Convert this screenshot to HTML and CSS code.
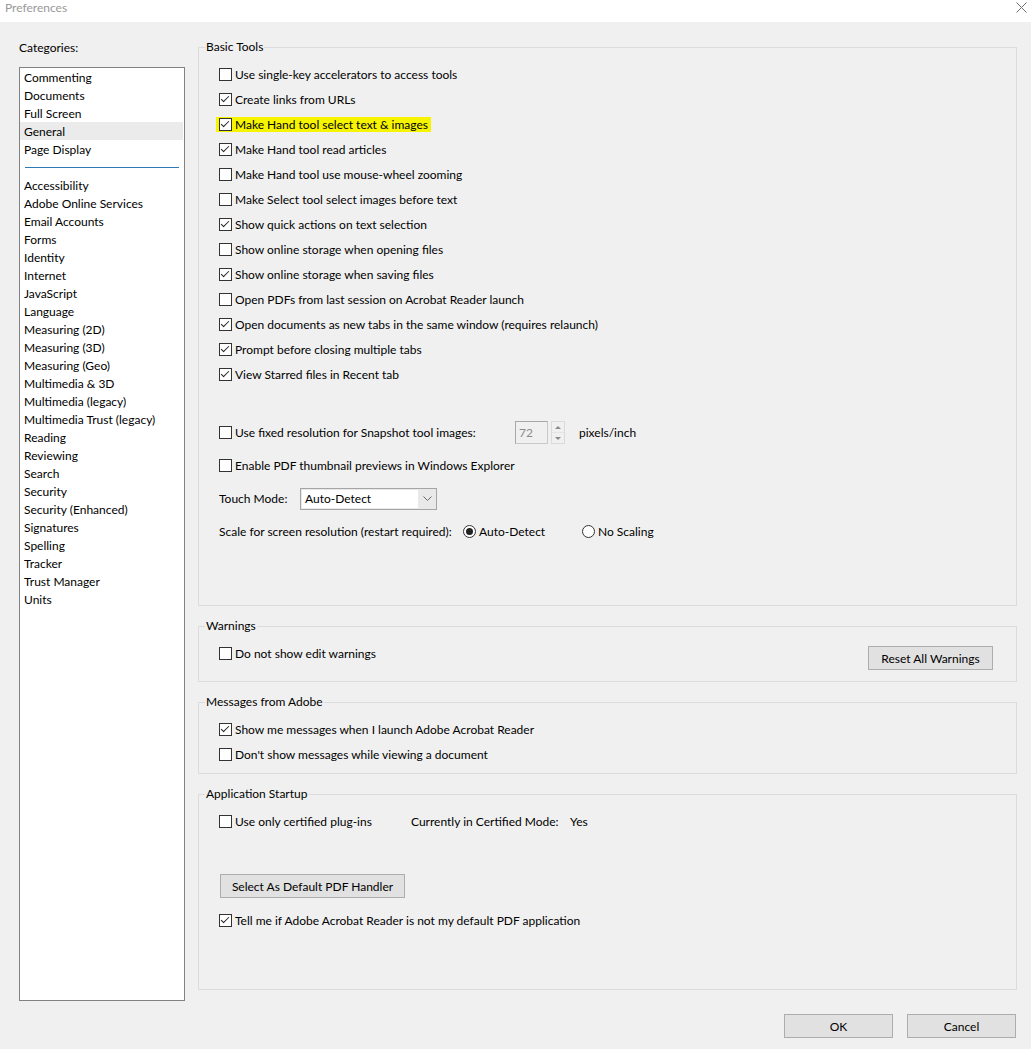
FILE: index.html
```html
<!DOCTYPE html>
<html lang="en">
<head>
  <meta charset="UTF-8">
  <title>Preferences</title>
  <link rel="stylesheet" href="styles.css">
</head>
<body>
  <!-- title bar -->
  <header class="titlebar">
    <span class="title">Preferences</span>
    <span class="close" title="Close">
      <svg width="11" height="11" viewBox="0 0 11 11"><path d="M0.5 0.5 L10.5 10.5 M10.5 0.5 L0.5 10.5" stroke="#6f6f6f" stroke-width="1" fill="none"/></svg>
    </span>
  </header>

  <div class="dialog">
    <!-- categories -->
    <aside class="categories">
      <div class="cat-label">Categories:</div>
      <ul class="cat-list">
        <li>Commenting</li>
        <li>Documents</li>
        <li>Full Screen</li>
        <li class="selected">General</li>
        <li>Page Display</li>
        <li class="sep"></li>
        <li>Accessibility</li>
        <li>Adobe Online Services</li>
        <li>Email Accounts</li>
        <li>Forms</li>
        <li>Identity</li>
        <li>Internet</li>
        <li>JavaScript</li>
        <li>Language</li>
        <li>Measuring (2D)</li>
        <li>Measuring (3D)</li>
        <li>Measuring (Geo)</li>
        <li>Multimedia &amp; 3D</li>
        <li>Multimedia (legacy)</li>
        <li>Multimedia Trust (legacy)</li>
        <li>Reading</li>
        <li>Reviewing</li>
        <li>Search</li>
        <li>Security</li>
        <li>Security (Enhanced)</li>
        <li>Signatures</li>
        <li>Spelling</li>
        <li>Tracker</li>
        <li>Trust Manager</li>
        <li>Units</li>
      </ul>
    </aside>

    <!-- settings panel -->
    <main class="panel">
      <fieldset class="group group-basic">
        <legend>Basic Tools</legend>
        <div class="group-body">
          <label class="opt"><span class="cb"></span>Use single-key accelerators to access tools</label>
          <label class="opt"><span class="cb on"></span>Create links from URLs</label>
          <label class="opt"><span class="hl"><span class="cb on"></span>Make Hand tool select text &amp; images</span></label>
          <label class="opt"><span class="cb on"></span>Make Hand tool read articles</label>
          <label class="opt"><span class="cb"></span>Make Hand tool use mouse-wheel zooming</label>
          <label class="opt"><span class="cb"></span>Make Select tool select images before text</label>
          <label class="opt"><span class="cb on"></span>Show quick actions on text selection</label>
          <label class="opt"><span class="cb"></span>Show online storage when opening files</label>
          <label class="opt"><span class="cb on"></span>Show online storage when saving files</label>
          <label class="opt"><span class="cb"></span>Open PDFs from last session on Acrobat Reader launch</label>
          <label class="opt"><span class="cb on"></span>Open documents as new tabs in the same window (requires relaunch)</label>
          <label class="opt"><span class="cb on"></span>Prompt before closing multiple tabs</label>
          <label class="opt"><span class="cb on"></span>View Starred files in Recent tab</label>

          <div class="wide-rows">
            <div class="wide">
              <label class="opt snap-label"><span class="cb"></span>Use fixed resolution for Snapshot tool images:</label>
              <span class="spin-input">72</span>
              <span class="spin-btns">
                <span class="spin-up"></span>
                <span class="spin-down"></span>
              </span>
              <span class="unit">pixels/inch</span>
            </div>
            <div class="wide">
              <label class="opt"><span class="cb"></span>Enable PDF thumbnail previews in Windows Explorer</label>
            </div>
            <div class="wide">
              <span class="touch-label">Touch Mode:</span>
              <span class="combo">
                <span class="combo-text">Auto-Detect</span>
                <span class="combo-arrow">
                  <svg width="9" height="5" viewBox="0 0 9 5"><path d="M0.5 0.5 L4.5 4.5 L8.5 0.5" stroke="#6a6a6a" fill="none"/></svg>
                </span>
              </span>
            </div>
            <div class="wide">
              <span class="scale-label">Scale for screen resolution (restart required):</span>
              <label class="radio-opt first"><span class="rb on"></span>Auto-Detect</label>
              <label class="radio-opt"><span class="rb"></span>No Scaling</label>
            </div>
          </div>
        </div>
      </fieldset>

      <fieldset class="group group-warn">
        <legend>Warnings</legend>
        <div class="group-body warn-body">
          <label class="opt"><span class="cb"></span>Do not show edit warnings</label>
          <button class="btn btn-reset">Reset All Warnings</button>
        </div>
      </fieldset>

      <fieldset class="group group-msg">
        <legend>Messages from Adobe</legend>
        <div class="group-body">
          <label class="opt"><span class="cb on"></span>Show me messages when I launch Adobe Acrobat Reader</label>
          <label class="opt"><span class="cb"></span>Don't show messages while viewing a document</label>
        </div>
      </fieldset>

      <fieldset class="group group-startup">
        <legend>Application Startup</legend>
        <div class="group-body">
          <div class="cert-row">
            <label class="opt cert-opt"><span class="cb"></span>Use only certified plug-ins</label>
            <span class="cert-label">Currently in Certified Mode:</span>
            <span>Yes</span>
          </div>
          <button class="btn btn-handler">Select As Default PDF Handler</button>
          <label class="opt tell-opt"><span class="cb on"></span>Tell me if Adobe Acrobat Reader is not my default PDF application</label>
        </div>
      </fieldset>
    </main>
  </div>

  <footer class="footer">
    <button class="btn btn-foot">OK</button>
    <button class="btn btn-foot">Cancel</button>
  </footer>
</body>
</html>
```

FILE: styles.css
```css
* { box-sizing: border-box; }
body { margin: 0; background: #f0f0f0; font-family: "Segoe UI", "Lato", "Noto Sans", sans-serif; font-size: 12px; color: #000; }

/* title bar */
.titlebar { height: 22px; background: #fff; display: flex; justify-content: space-between; padding: 0 2px 0 5px; }
.title { color: #999; line-height: 16px; }
.close { display: flex; padding: 2px 2px 0 0; }

/* main layout */
.dialog { display: flex; height: 979px; }
.categories { width: 185px; padding: 18px 0 0 19px; margin-right: 13px; }
.cat-label { line-height: 16px; margin-bottom: 11px; }
.cat-list { list-style: none; margin: 0; padding: 0; height: 934px; background: #fff; border: 1px solid #828282; }
.cat-list li { height: 18px; line-height: 17px; padding: 1px 0 0 4px; white-space: nowrap; }
.cat-list li.selected { background: #ebebeb; margin-right: 1px; }
.cat-list li.sep { padding: 9px 5px 0 5px; }
.cat-list li.sep::after { content: ''; display: block; border-top: 1px solid #2b7bb9; }

.panel { width: 819px; padding-top: 17px; display: flex; flex-direction: column; gap: 12px; }

/* group boxes */
.group { margin: 0; border: 1px solid #dcdcdc; padding: 0 0 0 6px; min-width: 0; }
.group legend { padding: 0 1px; line-height: 16px; }
.group-body { padding: 7px 0 0 14px; }
.group-basic { padding-bottom: 57px; }
.group-warn { padding-bottom: 11px; }
.group-msg { padding-bottom: 6px; }
.group-startup { padding-bottom: 56px; }

/* checkbox rows */
.opt { display: flex; align-items: center; height: 25px; white-space: nowrap; }
.cb { position: relative; width: 13px; height: 13px; border: 1px solid #333; background: #fff; margin-right: 3px; flex: none; }
.cb.on::after { content: ''; position: absolute; left: 3px; top: 0px; width: 3px; height: 7px; border-right: 1px solid #222; border-bottom: 1px solid #222; transform: rotate(45deg); }
.hl { display: flex; align-items: center; background: #f7f400; margin-left: -3px; padding: 0 3px; height: 15px; }

.wide-rows { margin-top: 29px; }
.wide { display: flex; align-items: center; height: 33px; white-space: nowrap; }
.snap-label { width: 296px; }
.spin-input { width: 33px; height: 23px; border: 1px solid #c8c8c8; border-top-color: #a8a8a8; border-left-color: #a8a8a8; color: #8c8c8c; padding-left: 3px; line-height: 21px; }
.spin-btns { display: flex; flex-direction: column; width: 14px; height: 23px; margin-left: 3px; border: 1px solid #dadada; }
.spin-up, .spin-down { flex: 1; display: flex; align-items: center; justify-content: center; }
.spin-up { border-bottom: 1px solid #e4e4e4; }
.spin-up::after { content: ''; border: 3px solid transparent; border-bottom: 3px solid #8a8a8a; border-top: 0; }
.spin-down::after { content: ''; border: 3px solid transparent; border-top: 3px solid #8a8a8a; border-bottom: 0; }
.unit { margin-left: 14px; }

.touch-label { width: 81px; }
.combo { display: flex; width: 137px; height: 22px; border: 1px solid #a5a5a5; background: #e9e9e9; }
.combo-text { flex: 1; background: #fff; margin: 1px 0 1px 1px; padding-left: 3px; line-height: 18px; }
.combo-arrow { width: 18px; display: flex; align-items: center; justify-content: center; }

.scale-label { width: 244px; }
.radio-opt { display: flex; align-items: center; }
.radio-opt.first { width: 119px; }
.rb { position: relative; width: 13px; height: 13px; border: 1px solid #333; border-radius: 50%; background: #fff; margin-right: 3px; }
.rb.on::after { content: ''; position: absolute; left: 2px; top: 2px; width: 7px; height: 7px; border-radius: 50%; background: #222; }

/* buttons */
.btn { font: inherit; color: #000; background: #e1e1e1; border: 1px solid #adadad; height: 24px; padding: 0; }
.warn-body { display: flex; justify-content: space-between; align-items: flex-start; }
.btn-reset { width: 125px; margin: 5px 23px 0 0; }
.cert-row { display: flex; align-items: center; }
.cert-opt { width: 192px; }
.cert-label { width: 159px; }
.btn-handler { display: block; width: 185px; margin: 40px 0 0 1px; }
.tell-opt { margin-top: 10px; }

.footer { display: flex; justify-content: flex-end; gap: 14px; padding: 13px 15px 0 0; }
.btn-foot { width: 109px; }
```
